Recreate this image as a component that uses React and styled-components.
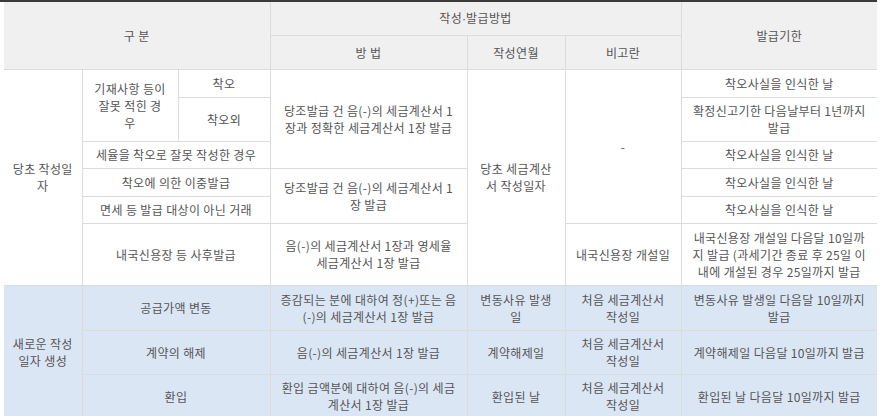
import React from 'react'
import styled, { createGlobalStyle } from 'styled-components'

const GlobalStyle = createGlobalStyle`
    html, body {
        margin: 0;
        padding: 0;
        background: #fff;
    }
    body {
        font-family: "Noto Sans CJK KR", "Noto Sans", sans-serif;
    }
`

const Wrapper = styled.div`
    width: 877px;
    border-top: 2px solid #3a3a3a;
`

const Table = styled.table`
    margin-left: 4px;
    width: 873px;
    table-layout: fixed;
    border-collapse: collapse;
    font-size: 12px;
    line-height: 17px;
    letter-spacing: 0.35px;
    color: #555;
`

const HeadCell = styled.th`
    background: #f0f0f0;
    font-weight: 400;
    color: #555;
    border: 1px solid #dcdcdc;
    border-top: none;
    padding: 0 8px;
    text-align: center;
    vertical-align: middle;

    &:first-child {
        border-left: none;
    }
    &:last-child {
        border-right: none;
    }
`

const Dot = styled.span`
    font-family: "Liberation Sans", sans-serif;
    letter-spacing: 0;
`

const Cell = styled.td`
    background: ${p => (p.$blue ? '#dbe6f5' : '#fff')};
    border: 1px solid #dcdcdc;
    padding: 0 8px;
    text-align: center;
    vertical-align: middle;
    word-break: break-all;

    &.first {
        border-left: none;
    }
    &.last {
        border-right: none;
    }
`

const Row = styled.tr`
    height: ${p => p.$h}px;
`

const widths = [78, 96, 92, 197, 98, 116, 196]

export default function App() {
    return (
        <Wrapper>
            <GlobalStyle />
            <Table>
                <colgroup>
                    {widths.map((w, i) => <col key={i} style={{ width: w }} />)}
                </colgroup>
                <thead>
                    <Row $h={33}>
                        <HeadCell colSpan={3} rowSpan={2}>구 분</HeadCell>
                        <HeadCell colSpan={3}>작성<Dot>·</Dot>발급방법</HeadCell>
                        <HeadCell rowSpan={2}>발급기한</HeadCell>
                    </Row>
                    <Row $h={34}>
                        <HeadCell>방 법</HeadCell>
                        <HeadCell>작성연월</HeadCell>
                        <HeadCell>비고란</HeadCell>
                    </Row>
                </thead>
                <tbody>
                    <Row $h={28}>
                        <Cell className="first" rowSpan={6}>당초 작성일<br />자</Cell>
                        <Cell rowSpan={2}>기재사항 등이<br />잘못 적힌 경<br />우</Cell>
                        <Cell>착오</Cell>
                        <Cell rowSpan={3}>당조발급 건 음(-)의 세금계산서 1<br />장과 정확한 세금계산서 1장 발급</Cell>
                        <Cell rowSpan={6}>당초 세금계산<br />서 작성일자</Cell>
                        <Cell rowSpan={5}>-</Cell>
                        <Cell className="last">착오사실을 인식한 날</Cell>
                    </Row>
                    <Row $h={44}>
                        <Cell>착오외</Cell>
                        <Cell className="last">확정신고기한 다음날부터 1년까지<br />발급</Cell>
                    </Row>
                    <Row $h={27}>
                        <Cell colSpan={2}>세율을 착오로 잘못 작성한 경우</Cell>
                        <Cell className="last">착오사실을 인식한 날</Cell>
                    </Row>
                    <Row $h={28}>
                        <Cell colSpan={2}>착오에 의한 이중발급</Cell>
                        <Cell rowSpan={2}>당조발급 건 음(-)의 세금계산서 1<br />장 발급</Cell>
                        <Cell className="last">착오사실을 인식한 날</Cell>
                    </Row>
                    <Row $h={27}>
                        <Cell colSpan={2}>면세 등 발급 대상이 아닌 거래</Cell>
                        <Cell className="last">착오사실을 인식한 날</Cell>
                    </Row>
                    <Row $h={62}>
                        <Cell colSpan={2}>내국신용장 등 사후발급</Cell>
                        <Cell>음(-)의 세금계산서 1장과 영세율<br />세금계산서 1장 발급</Cell>
                        <Cell>내국신용장 개설일</Cell>
                        <Cell className="last">내국신용장 개설일 다음달 10일까<br />지 발급 (과세기간 종료 후 25일 이<br />내에 개설된 경우 25일까지 발급</Cell>
                    </Row>
                    <Row $h={45}>
                        <Cell $blue className="first" rowSpan={3}>새로운 작성<br />일자 생성</Cell>
                        <Cell $blue colSpan={2}>공급가액 변동</Cell>
                        <Cell $blue>증감되는 분에 대하여 정(+)또는 음<br />(-)의 세금계산서 1장 발급</Cell>
                        <Cell $blue>변동사유 발생<br />일</Cell>
                        <Cell $blue>처음 세금계산서<br />작성일</Cell>
                        <Cell $blue className="last">변동사유 발생일 다음달 10일까지<br />발급</Cell>
                    </Row>
                    <Row $h={44}>
                        <Cell $blue colSpan={2}>계약의 해제</Cell>
                        <Cell $blue>음(-)의 세금계산서 1장 발급</Cell>
                        <Cell $blue>계약해제일</Cell>
                        <Cell $blue>처음 세금계산서<br />작성일</Cell>
                        <Cell $blue className="last">계약해제일 다음달 10일까지 발급</Cell>
                    </Row>
                    <Row $h={44}>
                        <Cell $blue colSpan={2}>환입</Cell>
                        <Cell $blue>환입 금액분에 대하여 음(-)의 세금<br />계산서 1장 발급</Cell>
                        <Cell $blue>환입된 날</Cell>
                        <Cell $blue>처음 세금계산서<br />작성일</Cell>
                        <Cell $blue className="last">환입된 날 다음달 10일까지 발급</Cell>
                    </Row>
                </tbody>
            </Table>
        </Wrapper>
    )
}
